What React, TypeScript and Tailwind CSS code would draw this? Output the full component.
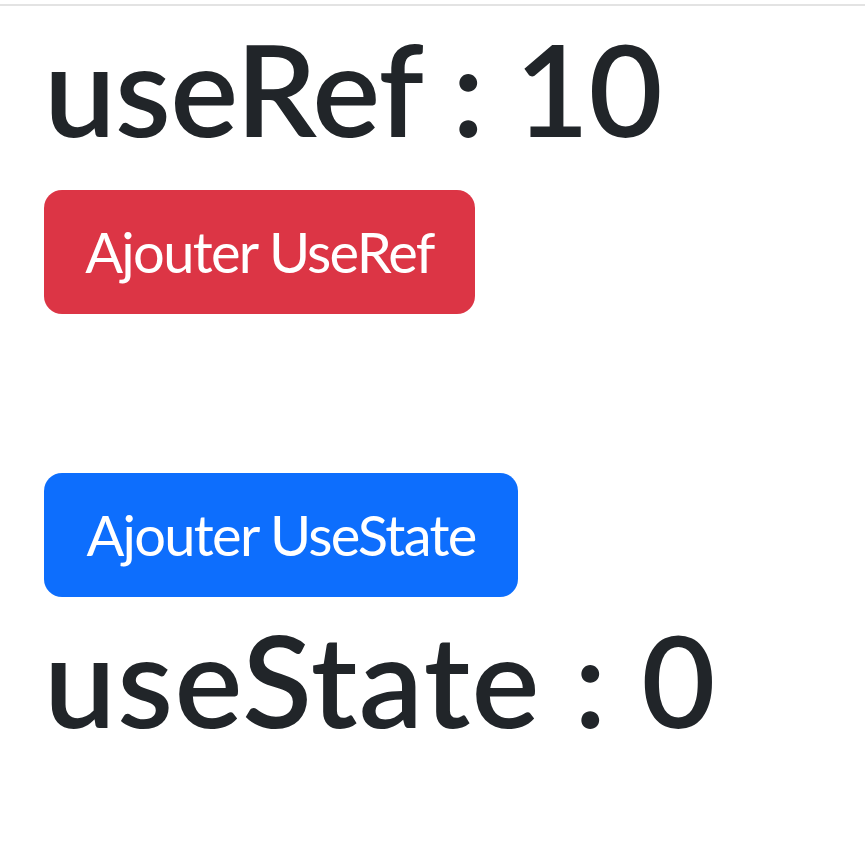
import { useRef, useState } from 'react';

export default function App() {
  const refCount = useRef(10);
  const [count, setCount] = useState(0);
  const [, force] = useState(0);

  return (
    <div className="min-h-screen bg-white text-[#212529]" style={{ fontFamily: 'Lato, "Open Sans", sans-serif' }}>
      <div className="h-[4px]" />
      <div className="h-[2px] bg-[#e3e3e3]" />
      <div className="px-[44px]">
        <h1 className="mt-[5px] text-[128px] leading-[1.2] font-semibold tracking-[-0.7px] whitespace-nowrap">useRef : {refCount.current}</h1>
        <button
          onClick={() => {
            refCount.current += 1;
          }}
          className="mt-[25px] flex h-[124px] w-[431px] items-center justify-center rounded-[18px] bg-[#dc3545] text-[56px] tracking-[-1.7px] text-white"
        >
          Ajouter UseRef
        </button>
        <div className="h-[159px]" />
        <button
          onClick={() => {
            setCount((c) => c + 1);
            force((f) => f + 1);
          }}
          className="flex h-[124px] w-[474px] items-center justify-center rounded-[18px] bg-[#0d6efd] text-[56px] tracking-[-1.7px] text-white"
        >
          Ajouter UseState
        </button>
        <h1 className="mt-[5px] text-[128px] leading-[1.2] font-semibold tracking-[1.4px] whitespace-nowrap">useState : {count}</h1>
      </div>
    </div>
  );
}
